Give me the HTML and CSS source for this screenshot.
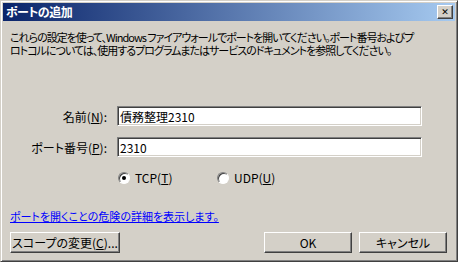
FILE: index.html
```html
<!DOCTYPE html>
<html lang="ja">
<head>
    <meta charset="UTF-8">
    <title>ポートの追加</title>
    <link rel="stylesheet" href="styles.css">
</head>
<body>
<div class="window">
    <div class="titlebar">
        <span class="title">ポートの追加</span>
        <span class="close">&#x2715;</span>
    </div>

    <div class="content">
        <p class="intro">これらの設定を使って、Windows ファイアウォールでポートを開いてください。ポート番号およびプ<br>ロトコルについては、使用するプログラムまたはサービスのドキュメントを参照してください。</p>

        <div class="fields">
            <div class="row">
                <label class="lbl" for="name">名前(<u>N</u>):</label>
                <input class="field" type="text" id="name" value="債務整理2310">
            </div>
            <div class="row">
                <label class="lbl" for="port">ポート番号(<u>P</u>):</label>
                <input class="field" type="text" id="port" value="2310">
            </div>
            <div class="radios">
                <label class="radio first"><span class="dot on"></span><span>TCP(<u>T</u>)</span></label>
                <label class="radio"><span class="dot"></span><span>UDP(<u>U</u>)</span></label>
            </div>
        </div>

        <a class="link" href="#">ポートを開くことの危険の詳細を表示します。</a>

        <div class="buttons">
            <button class="btn scope">スコープの変更(<u>C</u>)...</button>
            <span class="spacer"></span>
            <button class="btn">OK</button>
            <button class="btn">キャンセル</button>
        </div>
    </div>
</div>
</body>
</html>
```

FILE: styles.css
```css
/* classic dialog frame */
body {
  margin: 0;
  font-family: "Noto Sans CJK JP", "DejaVu Sans", sans-serif;
  font-size: 12px;
  line-height: 13px;
  font-feature-settings: "palt";
  color: #000;
}

.window {
  width: 458px;
  height: 262px;
  box-sizing: border-box;
  background-color: #d4d0c8;
  border: 1px solid;
  border-color: #d4d0c8 #404040 #404040 #d4d0c8;
  box-shadow: inset 1px 1px 0 #fff, inset -1px -1px 0 #808080;
  padding: 2px;
  display: flex;
  flex-direction: column;
}

.titlebar {
  height: 18px;
  flex-shrink: 0;
  background: linear-gradient(to right, #0a246a, #a6caf0);
  display: flex;
  align-items: center;
  justify-content: space-between;
  padding: 0 2px 0 3px;
}

.title {
  color: #fff;
  font-weight: bold;
  font-size: 12px;
  line-height: 18px;
  letter-spacing: -0.5px;
}

/* the little X button */
.close {
  width: 16px;
  height: 14px;
  box-sizing: border-box;
  background-color: #d4d0c8;
  border: 1px solid;
  border-color: #fff #404040 #404040 #fff;
  box-shadow: inset -1px -1px 0 #808080;
  font-size: 9px;
  font-weight: bold;
  line-height: 12px;
  text-align: center;
}

.content {
  flex: 1;
  padding: 0 8px 0 7px;
  display: flex;
  flex-direction: column;
}

.intro {
  margin: 10px 0 0 0;
  white-space: nowrap;
  font-size: 11px;
  letter-spacing: -1px;
}

.fields {
  margin-top: 49px;
  display: flex;
  flex-direction: column;
  gap: 11px;
}

.row {
  display: flex;
  align-items: center;
  gap: 10px;
}

.lbl {
  width: 97px;
  text-align: right;
  white-space: nowrap;
}

.field {
  width: 305px;
  height: 20px;
  box-sizing: border-box;
  margin: 0;
  padding: 1px 2px;
  font-family: inherit;
  font-size: 12px;
  font-feature-settings: "palt";
  background: #fff;
  border: 1px solid;
  border-color: #808080 #fff #fff #808080;
  box-shadow: inset 1px 1px 0 #404040, inset -1px -1px 0 #d4d0c8;
  outline: none;
}

.radios {
  display: flex;
  padding-left: 108px;
  margin-top: 3px;
}

.radio {
  display: flex;
  align-items: center;
  gap: 5px;
}

.radio.first {
  width: 99px;
}

.dot {
  width: 12px;
  height: 12px;
  box-sizing: border-box;
  border-radius: 50%;
  background: #fff;
  border: 1px solid;
  border-color: #808080 #fff #fff #808080;
  box-shadow: inset 1px 1px 0 #404040;
  position: relative;
}

.dot.on::after {
  content: "";
  position: absolute;
  left: 3px;
  top: 3px;
  width: 4px;
  height: 4px;
  border-radius: 50%;
  background: #000;
}

.link {
  margin-top: 26px;
  font-size: 11px;
  color: #0000ff;
  align-self: flex-start;
}

.buttons {
  display: flex;
  margin-top: 9px;
  gap: 7px;
}

.spacer {
  flex: 1;
}

.btn {
  width: 88px;
  height: 21px;
  margin: 0;
  padding: 0;
  font-family: inherit;
  font-size: 12px;
  font-feature-settings: "palt";
  white-space: nowrap;
  background: #d4d0c8;
  border: 1px solid;
  border-color: #fff #404040 #404040 #fff;
  box-shadow: inset -1px -1px 0 #808080;
}

.btn.scope {
  width: 110px;
}
```
